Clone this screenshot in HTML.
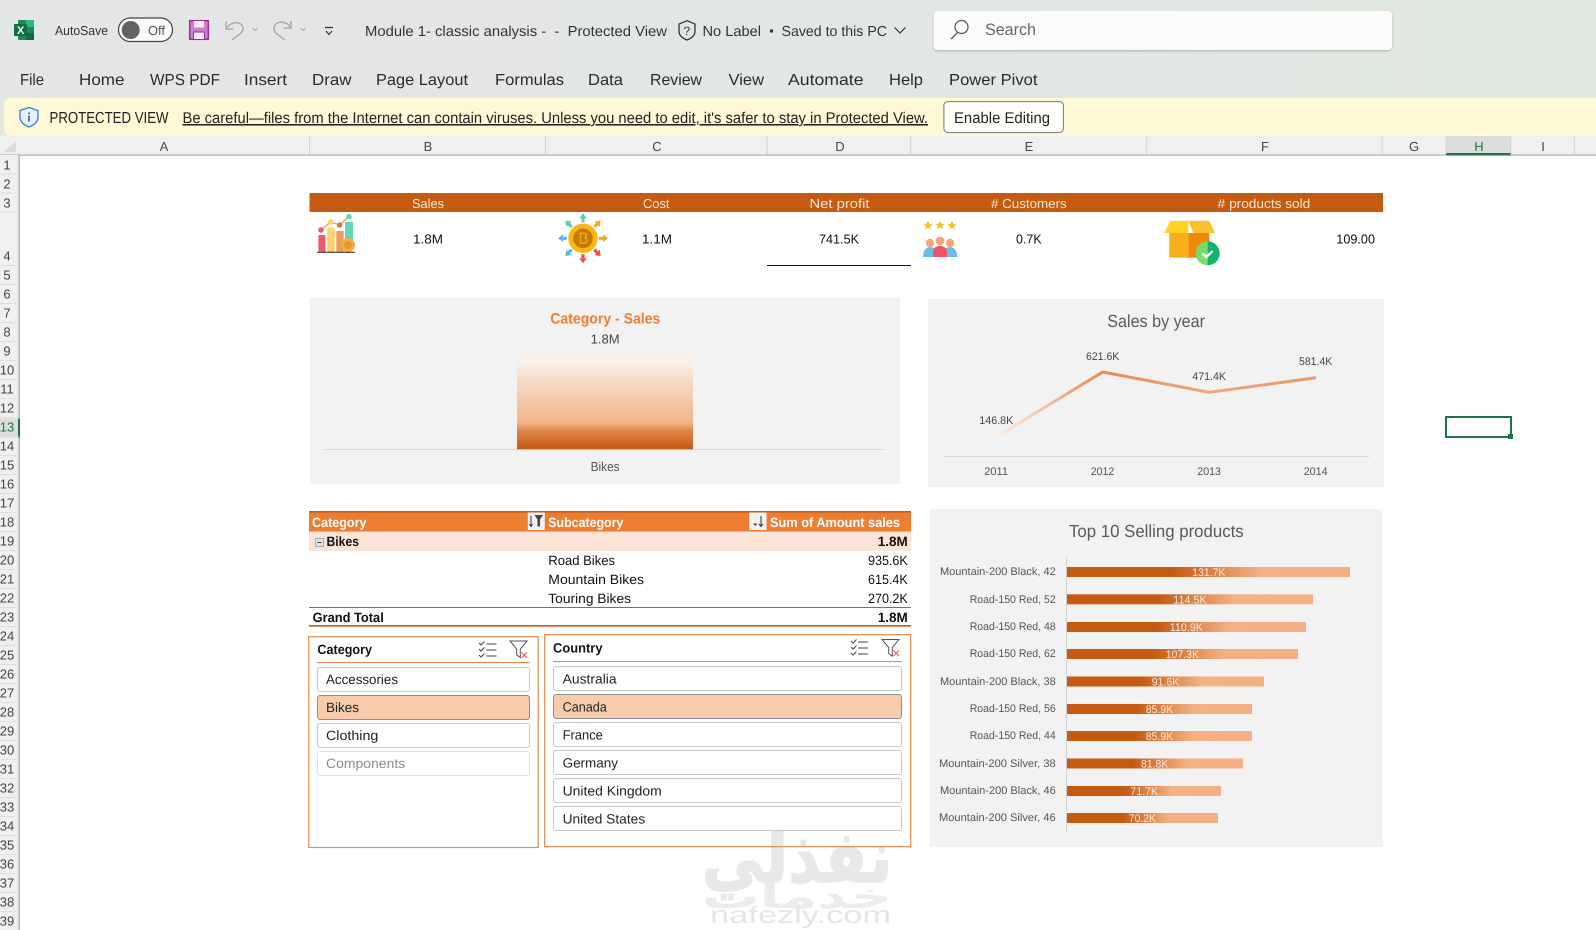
<!DOCTYPE html>
<html lang="en"><head><meta charset="utf-8"><title>Module 1- classic analysis</title>
<style>
html,body{margin:0;padding:0;background:#fff;width:1596px;height:930px;overflow:hidden}
svg{display:block}
text{font-family:"Liberation Sans",sans-serif;text-rendering:geometricPrecision}
.m{font-size:16px;fill:#2b2b2b}
.t{font-size:14.5px;fill:#333}
.c{font-size:13px;fill:#454545;text-anchor:middle}
.r{font-size:13px;fill:#454545;text-anchor:middle}
.h{font-size:13px;fill:#fbe9dc}
.v{font-size:13px;fill:#111}
.l{font-size:11px;fill:#444}
.pv{font-size:13.5px;fill:#111}
.pb{font-size:13.5px;fill:#111;font-weight:bold}
.ph{font-size:13.5px;fill:#fff;font-weight:bold}
.s{font-size:13.5px;fill:#222}
.d{font-size:11px;fill:#fbeadf}
.a{font-size:11px;fill:#555}
</style></head><body>
<svg width="1596" height="930" viewBox="0 0 1596 930" xmlns="http://www.w3.org/2000/svg">
<defs>
<linearGradient id="rib" x1="0" x2="1" y1="0" y2="0"><stop offset="0" stop-color="#e5e6e6"/><stop offset="1" stop-color="#e0e8e2"/></linearGradient>
<linearGradient id="bar" x1="0" x2="0" y1="0" y2="1"><stop offset="0" stop-color="#f5f0ec"/><stop offset=".1" stop-color="#f8efe8"/><stop offset=".3" stop-color="#f6d9c4"/><stop offset=".55" stop-color="#f4c39f"/><stop offset=".72" stop-color="#f2b388"/><stop offset=".82" stop-color="#db8143"/><stop offset="1" stop-color="#c55a11"/></linearGradient>
<linearGradient id="hb" x1="0" x2="1" y1="0" y2="0"><stop offset=".37" stop-color="#c55a11"/><stop offset=".68" stop-color="#f4b183"/><stop offset="1" stop-color="#f4b084"/></linearGradient>
<linearGradient id="ln" gradientUnits="userSpaceOnUse" x1="996" x2="1316" y1="0" y2="0"><stop offset="0" stop-color="#fdf0e6"/><stop offset=".33" stop-color="#e68a50"/><stop offset=".66" stop-color="#efa87c"/><stop offset="1" stop-color="#ea9764"/></linearGradient>
<path id="ar" d="M0 -25 L-3.8 -20 H-1.6 V-16 H1.6 V-20 H3.8 Z"/>
<filter id="sh" x="-5%" y="-20%" width="110%" height="150%"><feDropShadow dx="0" dy="1" stdDeviation="1" flood-color="#000" flood-opacity=".25"/></filter>
</defs>

<!-- ribbon -->
<rect width="1596" height="136" fill="url(#rib)"/>
<!-- excel icon -->
<rect x="18" y="20" width="16" height="20" rx="1" fill="#1d8a55"/>
<rect x="26" y="20" width="8" height="7" fill="#37b778"/>
<rect x="26" y="33" width="8" height="7" fill="#0f6b3c"/>
<rect x="14" y="24" width="13" height="12" rx="1" fill="#0f7040"/>
<text x="17" y="34" font-size="11" font-weight="bold" fill="#fff">X</text>
<text class="t" x="55" y="35" style="font-size:13px" textLength="53" lengthAdjust="spacingAndGlyphs">AutoSave</text>
<rect x="118.5" y="18" width="54" height="23.5" rx="11.7" fill="#fafafa" stroke="#444" stroke-width="1.2"/>
<circle cx="130.7" cy="30" r="9" fill="#626262"/>
<text x="148" y="35" style="font-size:13px;fill:#555" textLength="17" lengthAdjust="spacingAndGlyphs">Off</text>
<!-- save -->
<rect x="189.7" y="20.7" width="18.6" height="18.6" fill="#cf7fcb" stroke="#9b2c9e" stroke-width="1.5"/>
<rect x="194" y="21" width="10" height="6.5" fill="#fbe8fa"/>
<rect x="193.5" y="32" width="11" height="7.5" fill="#fbe8fa" stroke="#9b2c9e"/>
<!-- undo redo -->
<g fill="none" stroke="#a9acab" stroke-width="1.5">
<path d="M226 21.5V29H233.5M226 29C230 21 243 20 243 29C243 33 238 35 232 40"/>
<path d="M291 21V28H283.5M291 28C287 20 274 20 274 29C274 33 280 36 285 40"/>
<path d="M252.5 28l2.5 2.5 2.5-2.5M300.5 28l2.5 2.5 2.5-2.5" stroke-width="1"/>
</g>
<path d="M325 27.5h8M326 31l3 3.5 3-3.5" fill="none" stroke="#333" stroke-width="1.2"/>
<text class="t" x="365" y="36" textLength="302" lengthAdjust="spacingAndGlyphs">Module 1- classic analysis -&#160; -&#160; Protected View</text>
<path d="M687 20.7L679 24V31C679 36 683 38.5 687 40C691 38.5 695 36 695 31V24Z" fill="none" stroke="#333" stroke-width="1.3"/>
<text x="683.5" y="35" style="font-size:12px;fill:#333">?</text>
<text class="t" x="702.5" y="36" textLength="58.5" lengthAdjust="spacingAndGlyphs">No Label</text>
<circle cx="771.5" cy="31" r="1.7" fill="#333"/>
<text class="t" x="781.5" y="36" textLength="105.5" lengthAdjust="spacingAndGlyphs">Saved to this PC</text>
<path d="M894.5 27.5l5.5 5.5 5.5-5.5" fill="none" stroke="#333" stroke-width="1.2"/>
<rect x="933.5" y="11" width="458.5" height="39" rx="4" fill="#fafbfa" filter="url(#sh)"/>
<circle cx="961.5" cy="27" r="6.5" fill="none" stroke="#555" stroke-width="1.2"/>
<path d="M957.5 32.5L951 39" stroke="#555" stroke-width="1.3"/>
<text x="985" y="35" style="font-size:16.5px;fill:#666" textLength="51" lengthAdjust="spacingAndGlyphs">Search</text>
<!-- menu -->
<g class="menu">
<text class="m" x="20" y="85" textLength="24" lengthAdjust="spacingAndGlyphs">File</text>
<text class="m" x="79" y="85" textLength="45.5" lengthAdjust="spacingAndGlyphs">Home</text>
<text class="m" x="150" y="85" textLength="70" lengthAdjust="spacingAndGlyphs">WPS PDF</text>
<text class="m" x="244" y="85" textLength="43" lengthAdjust="spacingAndGlyphs">Insert</text>
<text class="m" x="312" y="85" textLength="39.5" lengthAdjust="spacingAndGlyphs">Draw</text>
<text class="m" x="376" y="85" textLength="92" lengthAdjust="spacingAndGlyphs">Page Layout</text>
<text class="m" x="495" y="85" textLength="69" lengthAdjust="spacingAndGlyphs">Formulas</text>
<text class="m" x="588" y="85" textLength="35" lengthAdjust="spacingAndGlyphs">Data</text>
<text class="m" x="650" y="85" textLength="52" lengthAdjust="spacingAndGlyphs">Review</text>
<text class="m" x="728.5" y="85" textLength="35.5" lengthAdjust="spacingAndGlyphs">View</text>
<text class="m" x="788" y="85" textLength="75.5" lengthAdjust="spacingAndGlyphs">Automate</text>
<text class="m" x="889" y="85" textLength="34" lengthAdjust="spacingAndGlyphs">Help</text>
<text class="m" x="949" y="85" textLength="88.5" lengthAdjust="spacingAndGlyphs">Power Pivot</text>
</g>
<!-- protected bar -->
<rect x="4" y="98" width="1600" height="38" rx="7" fill="#fff8d6"/>
<path d="M29 107.5L20 110.5V117C20 122 24 125 29 127C34 125 38 122 38 117V110.5Z" fill="#e8f1fb" stroke="#3a86cc" stroke-width="1.4"/>
<path d="M29 112.5v1.6M29 115.5v6" stroke="#2a6fb0" stroke-width="1.8"/>
<text x="49.5" y="123" style="font-size:16px;fill:#222" textLength="119" lengthAdjust="spacingAndGlyphs">PROTECTED VIEW</text>
<text x="182.5" y="123" style="font-size:15.5px;fill:#222;text-decoration:underline" textLength="745.5" lengthAdjust="spacingAndGlyphs">Be careful—files from the Internet can contain viruses. Unless you need to edit, it's safer to stay in Protected View.</text>
<rect x="943.9" y="101.6" width="119.5" height="31" rx="4" fill="#fffefa" stroke="#777" stroke-width="1"/>
<text x="954" y="123" style="font-size:15.5px;fill:#222" textLength="96" lengthAdjust="spacingAndGlyphs">Enable Editing</text>

<!-- column headers -->
<rect x="0" y="136" width="1596" height="19" fill="#f0f0f0"/>
<rect x="1446.3" y="136" width="64.4" height="19" fill="#dbdedc"/>
<path d="M309.5 137V154M545.5 137V154M767 137V154M910.7 137V154M1146.7 137V154M1382 137V154M1446.3 137V154M1510.7 137V154M1574.3 137V154" stroke="#d2d2d2"/>
<rect x="0" y="154.5" width="1596" height="1.2" fill="#aaa"/>
<rect x="1446.3" y="153" width="64.4" height="2.3" fill="#217346"/>
<polygon points="4,152 16,141 16,152" fill="#dadada"/>
<g>
<text class="c" x="164" y="151">A</text><text class="c" x="428" y="151">B</text><text class="c" x="657" y="151">C</text><text class="c" x="840" y="151">D</text><text class="c" x="1029" y="151">E</text><text class="c" x="1265" y="151">F</text><text class="c" x="1414" y="151">G</text><text class="c" x="1479" y="151" style="fill:#217346">H</text><text class="c" x="1543" y="151">I</text>
</g>
<!-- row header -->
<rect x="0" y="155" width="19.5" height="775" fill="#f0f0f0"/>
<rect x="0" y="418.6" width="19.5" height="19" fill="#dbdedc"/>
<rect x="18.5" y="155" width="1.3" height="775" fill="#aaa"/>
<rect x="18" y="418.6" width="2" height="19" fill="#217346"/>
<path d="M0 174H19M0 193H19M0 212H19M0 265.6H19M0 284.6H19M0 303.6H19M0 322.6H19M0 341.6H19M0 360.6H19M0 379.6H19M0 398.6H19M0 417.6H19M0 436.6H19M0 455.6H19M0 474.6H19M0 493.6H19M0 512.6H19M0 531.6H19M0 550.6H19M0 569.6H19M0 588.6H19M0 607.6H19M0 626.6H19M0 645.6H19M0 664.6H19M0 683.6H19M0 702.6H19M0 721.6H19M0 740.6H19M0 759.6H19M0 778.6H19M0 797.6H19M0 816.6H19M0 835.6H19M0 854.6H19M0 873.6H19M0 892.6H19M0 911.6H19" stroke="#dcdcdc"/>
<g>
<text class="r" x="7" y="169.5">1</text><text class="r" x="7" y="188.5">2</text><text class="r" x="7" y="207.5">3</text><text class="r" x="7" y="260.7">4</text><text class="r" x="7" y="279.7">5</text><text class="r" x="7" y="298.7">6</text><text class="r" x="7" y="317.7">7</text><text class="r" x="7" y="336.7">8</text><text class="r" x="7" y="355.7">9</text><text class="r" x="7" y="374.7">10</text><text class="r" x="7" y="393.7">11</text><text class="r" x="7" y="412.7">12</text><text class="r" x="7" y="431.7" style="fill:#217346">13</text><text class="r" x="7" y="450.7">14</text><text class="r" x="7" y="469.7">15</text><text class="r" x="7" y="488.7">16</text><text class="r" x="7" y="507.7">17</text><text class="r" x="7" y="526.7">18</text><text class="r" x="7" y="545.7">19</text><text class="r" x="7" y="564.7">20</text><text class="r" x="7" y="583.7">21</text><text class="r" x="7" y="602.7">22</text><text class="r" x="7" y="621.7">23</text><text class="r" x="7" y="640.7">24</text><text class="r" x="7" y="659.7">25</text><text class="r" x="7" y="678.7">26</text><text class="r" x="7" y="697.7">27</text><text class="r" x="7" y="716.7">28</text><text class="r" x="7" y="735.7">29</text><text class="r" x="7" y="754.7">30</text><text class="r" x="7" y="773.7">31</text><text class="r" x="7" y="792.7">32</text><text class="r" x="7" y="811.7">33</text><text class="r" x="7" y="830.7">34</text><text class="r" x="7" y="849.7">35</text><text class="r" x="7" y="868.7">36</text><text class="r" x="7" y="887.7">37</text><text class="r" x="7" y="906.7">38</text><text class="r" x="7" y="925.7">39</text>
</g>

<!-- selected cell -->
<rect x="1446" y="417" width="65" height="20" fill="none" stroke="#217346" stroke-width="2"/>
<rect x="1508" y="434" width="5" height="5" fill="#217346"/>

<!-- KPI band -->
<rect x="309.5" y="193" width="1073.5" height="19" fill="#c55a11"/>
<text class="h" x="412" y="208" textLength="32" lengthAdjust="spacingAndGlyphs">Sales</text>
<text class="h" x="643" y="208" textLength="26.5" lengthAdjust="spacingAndGlyphs">Cost</text>
<text class="h" x="809.5" y="208" textLength="60" lengthAdjust="spacingAndGlyphs">Net profit</text>
<text class="h" x="991" y="208" textLength="75.7" lengthAdjust="spacingAndGlyphs"># Customers</text>
<text class="h" x="1217.7" y="208" textLength="92.6" lengthAdjust="spacingAndGlyphs"># products sold</text>
<text class="v" x="413" y="243.6" textLength="30" lengthAdjust="spacingAndGlyphs">1.8M</text>
<text class="v" x="642" y="243.6" textLength="30" lengthAdjust="spacingAndGlyphs">1.1M</text>
<text class="v" x="819" y="243.6" textLength="40" lengthAdjust="spacingAndGlyphs">741.5K</text>
<text class="v" x="1016" y="243.6" textLength="25.7" lengthAdjust="spacingAndGlyphs">0.7K</text>
<text class="v" x="1336.3" y="243.6" textLength="38.7" lengthAdjust="spacingAndGlyphs">109.00</text>
<rect x="767" y="265" width="144" height="1" fill="#111"/>

<!-- chart icon -->
<rect x="318.4" y="235" width="7" height="17" fill="#ee5a66"/>
<rect x="327.3" y="227.7" width="7.4" height="24.3" fill="#ffd167"/>
<rect x="336.3" y="231" width="7.4" height="21" fill="#ed9b5f"/>
<rect x="345" y="222" width="8" height="18" fill="#62d6b9"/>
<circle cx="348" cy="245" r="7" fill="#f3ab3e"/>
<circle cx="348" cy="245" r="4" fill="#e09a30"/>
<path d="M321 230L330.6 222L339.6 225L349 216.7" fill="none" stroke="#ed9b5f" stroke-width="1.4"/>
<circle cx="321" cy="230" r="2.8" fill="#ee5a66"/><circle cx="330.6" cy="222" r="2.8" fill="#ffd167"/><circle cx="339.6" cy="225" r="2.8" fill="#d97a3a"/><circle cx="349" cy="216.7" r="2.8" fill="#62d6b9"/>
<rect x="317" y="251.7" width="38" height="1.2" fill="#444"/>

<!-- coin icon -->
<g transform="translate(583 238.3)">
<use href="#ar" fill="#5ccdb4"/>
<use href="#ar" fill="#5ccdb4" transform="rotate(-45)"/>
<use href="#ar" fill="#f5a623" transform="rotate(45)"/>
<use href="#ar" fill="#f5a623" transform="rotate(90)"/>
<use href="#ar" fill="#e8505b" transform="rotate(135)"/>
<use href="#ar" fill="#e8505b" transform="rotate(180)"/>
<use href="#ar" fill="#5cb8f0" transform="rotate(225)"/>
<use href="#ar" fill="#5cb8f0" transform="rotate(270)"/>
<circle r="14.7" fill="#fbb614"/>
<circle r="9.8" fill="#c57a08"/>
<path d="M-2.5 -5H1.5C4 -5 4 -1 1.5 -.5C4.5 0 4.5 5 1.5 5H-2.5Z" fill="none" stroke="#f2a70e" stroke-width="1.5"/>
</g>

<!-- customers icon -->
<g fill="#fbbf1f">
<polygon points="928,220.5 929.3,223.6 932.6,223.9 930.1,226 930.9,229.3 928,227.5 925.1,229.3 925.9,226 923.4,223.9 926.7,223.6"/>
<polygon points="940,220.5 941.3,223.6 944.6,223.9 942.1,226 942.9,229.3 940,227.5 937.1,229.3 937.9,226 935.4,223.9 938.7,223.6"/>
<polygon points="952,220.5 953.3,223.6 956.6,223.9 954.1,226 954.9,229.3 952,227.5 949.1,229.3 949.9,226 947.4,223.9 950.7,223.6"/>
</g>
<path d="M923 257C923 251 926 247 930 247C933 247 936 249 937 252V257Z" fill="#6dbdea"/>
<path d="M957.3 257C957.3 251 954 247 950 247C947 247 944 249 943 252V257Z" fill="#6dbdea"/>
<circle cx="930" cy="243" r="4.2" fill="#f4a77a"/><circle cx="950" cy="243" r="4.2" fill="#f4a77a"/>
<path d="M933 257V252C933 248 936 246 940 246C944 246 947 248 947 252V257Z" fill="#ef5365"/>
<circle cx="940" cy="241" r="4.4" fill="#f4a77a"/>

<!-- box icon -->
<rect x="1169.3" y="233" width="19" height="24.7" fill="#f8b01a"/>
<rect x="1188.3" y="233" width="21" height="24.7" fill="#f0880a"/>
<polygon points="1170.5,220.7 1188.3,220.7 1188.3,233 1164.3,233" fill="#ffd326"/>
<polygon points="1188.3,220.7 1209.3,220.7 1215,233 1193.3,233" fill="#fdc030"/>
<circle cx="1207.7" cy="253.3" r="12" fill="#15b26b"/>
<path d="M1207.7 241.3A12 12 0 0 0 1207.7 265.3Z" fill="#7cdc6a"/>
<path d="M1202.5 253.5l3.7 3.5 6.5-6" fill="none" stroke="#fff" stroke-width="2.4"/>

<!-- category chart -->
<rect x="310" y="298" width="590" height="186" fill="#f2f2f2"/>
<text x="550.3" y="323.3" style="font-size:15px;font-weight:bold;fill:#ed7d31" textLength="110" lengthAdjust="spacingAndGlyphs">Category - Sales</text>
<text x="590.6" y="343.6" style="font-size:13px;fill:#444" textLength="29" lengthAdjust="spacingAndGlyphs">1.8M</text>
<rect x="324" y="449" width="561.6" height="1" fill="#d9d9d9"/>
<rect x="517" y="354" width="176" height="95.3" fill="url(#bar)"/>
<text x="590.6" y="471" style="font-size:13px;fill:#555" textLength="29" lengthAdjust="spacingAndGlyphs">Bikes</text>

<!-- sales by year -->
<rect x="928" y="299" width="456" height="188" fill="#f2f2f2"/>
<text x="1107.3" y="327" style="font-size:17.5px;fill:#595959" textLength="97.7" lengthAdjust="spacingAndGlyphs">Sales by year</text>
<polyline points="996.7,436.7 1102.7,372 1209.3,392.3 1316,377.7" fill="none" stroke="url(#ln)" stroke-width="3" stroke-linejoin="round"/>
<text class="l" x="979.3" y="424" textLength="34" lengthAdjust="spacingAndGlyphs">146.8K</text>
<text class="l" x="1086" y="360" textLength="33.3" lengthAdjust="spacingAndGlyphs">621.6K</text>
<text class="l" x="1192.3" y="380" textLength="33.7" lengthAdjust="spacingAndGlyphs">471.4K</text>
<text class="l" x="1299" y="365" textLength="33.3" lengthAdjust="spacingAndGlyphs">581.4K</text>
<rect x="944" y="456" width="425.3" height="1" fill="#d9d9d9"/>
<text class="a" x="984.3" y="475" textLength="23.7" lengthAdjust="spacingAndGlyphs">2011</text>
<text class="a" x="1090.7" y="475" textLength="23.6" lengthAdjust="spacingAndGlyphs">2012</text>
<text class="a" x="1197.3" y="475" textLength="23.7" lengthAdjust="spacingAndGlyphs">2013</text>
<text class="a" x="1303.7" y="475" textLength="24" lengthAdjust="spacingAndGlyphs">2014</text>

<!-- pivot -->
<rect x="309" y="512" width="602" height="19.5" fill="#ed7d31"/>
<rect x="309" y="511" width="602" height="1.6" fill="#c55a11"/>
<text class="ph" x="312" y="527" textLength="54.5" lengthAdjust="spacingAndGlyphs">Category</text>
<rect x="527.8" y="512.5" width="17" height="17.5" fill="#f2f2f2"/>
<path d="M531 516v10M529.3 524l1.7 2.5 1.7-2.5" fill="none" stroke="#444" stroke-width="1.1"/>
<path d="M534.5 515h8.5l-3 4.5v7h-2.5v-7Z" fill="#444"/>
<text class="ph" x="548.3" y="527" textLength="75" lengthAdjust="spacingAndGlyphs">Subcategory</text>
<rect x="749.2" y="512.5" width="17.4" height="17.5" fill="#f2f2f2"/>
<path d="M761 516v10M759 524l2 2.5 2-2.5" fill="none" stroke="#444" stroke-width="1.1"/>
<path d="M753 523.5h4.5l-2.2 2.5Z" fill="#444"/>
<text class="ph" x="770" y="527" textLength="130" lengthAdjust="spacingAndGlyphs">Sum of Amount sales</text>
<rect x="309" y="531.5" width="602" height="19.5" fill="#fbe4d5"/>
<rect x="315.5" y="538.5" width="8" height="8" fill="#dfe3e8" stroke="#9aa3ad" stroke-width=".8"/>
<path d="M317.5 542.5h4" stroke="#333" stroke-width="1"/>
<text class="pb" x="326.5" y="546" textLength="32.5" lengthAdjust="spacingAndGlyphs">Bikes</text>
<text class="pb" x="877.7" y="546" textLength="30" lengthAdjust="spacingAndGlyphs">1.8M</text>
<text class="pv" x="548.3" y="565" textLength="66.7" lengthAdjust="spacingAndGlyphs">Road Bikes</text>
<text class="pv" x="868" y="565" textLength="39.8" lengthAdjust="spacingAndGlyphs">935.6K</text>
<text class="pv" x="548.3" y="584" textLength="95.7" lengthAdjust="spacingAndGlyphs">Mountain Bikes</text>
<text class="pv" x="868" y="584" textLength="39.8" lengthAdjust="spacingAndGlyphs">615.4K</text>
<text class="pv" x="548.3" y="603" textLength="82.7" lengthAdjust="spacingAndGlyphs">Touring Bikes</text>
<text class="pv" x="868" y="603" textLength="39.8" lengthAdjust="spacingAndGlyphs">270.2K</text>
<rect x="309" y="607" width="602" height="1" fill="#c55a11"/>
<text class="pb" x="312.6" y="622" textLength="71.2" lengthAdjust="spacingAndGlyphs">Grand Total</text>
<text class="pb" x="877.7" y="622" textLength="30" lengthAdjust="spacingAndGlyphs">1.8M</text>
<rect x="309" y="625" width="602" height="1.6" fill="#c55a11"/>

<!-- category slicer -->
<rect x="308.7" y="636.7" width="229.5" height="210.8" fill="#fff" stroke="#e08a4e" stroke-width="1.2"/>
<text class="pb" x="317.4" y="654" textLength="54.6" lengthAdjust="spacingAndGlyphs">Category</text>
<rect x="317" y="662" width="212.7" height="1.1" fill="#e08a50"/>
<path d="M479 643l2 2 3.5-3.5M479 649l2 2 3.5-3.5M479 655l2 2 3.5-3.5" fill="none" stroke="#444" stroke-width="1"/>
<path d="M486.5 644h10M486.5 650h10M486.5 656h10" stroke="#444" stroke-width="1.1"/>
<path d="M510 641h17l-6.7 8v8.5l-3.6-2.5v-6Z" fill="none" stroke="#555" stroke-width="1"/>
<path d="M521.5 652.5l5.5 5.5M527 652.5l-5.5 5.5" stroke="#e5604f" stroke-width="1.2"/>
<g stroke-width="1">
<rect x="317.5" y="667.5" width="212" height="24" rx="2.5" fill="#fff" stroke="#c8c8c8"/>
<rect x="317.5" y="695.5" width="212" height="24" rx="2.5" fill="#f8cbad" stroke="#8f8f8f"/>
<rect x="317.5" y="723.5" width="212" height="24" rx="2.5" fill="#fff" stroke="#c8c8c8"/>
<rect x="317.5" y="751.5" width="212" height="24" rx="2.5" fill="#fff" stroke="#e0e0e0"/>
</g>
<text class="s" x="326" y="684" textLength="72" lengthAdjust="spacingAndGlyphs">Accessories</text>
<text class="s" x="326" y="712" textLength="33" lengthAdjust="spacingAndGlyphs">Bikes</text>
<text class="s" x="326" y="740" textLength="52.3" lengthAdjust="spacingAndGlyphs">Clothing</text>
<text class="s" x="326" y="768" style="fill:#8a8a8a" textLength="79.2" lengthAdjust="spacingAndGlyphs">Components</text>

<!-- country slicer -->
<rect x="544.7" y="634.7" width="366" height="212" fill="#fff"/>
<!-- watermark -->
<text x="797" y="882" text-anchor="middle" textLength="191" lengthAdjust="spacingAndGlyphs" style="font-family:'DejaVu Sans',sans-serif;font-size:72px;font-weight:bold;fill:#e8e8e8;stroke:#e8e8e8;stroke-width:1.5">نفذلي</text>
<text x="797" y="908" text-anchor="middle" textLength="191" lengthAdjust="spacingAndGlyphs" style="font-family:'DejaVu Sans',sans-serif;font-size:34px;font-weight:bold;fill:#ececec">خدمات</text>
<text x="710" y="923" style="font-size:24px;fill:#e5e5e5" textLength="181" lengthAdjust="spacingAndGlyphs">nafezly.com</text>

<rect x="544.7" y="634.7" width="366" height="212" fill="none" stroke="#e08a4e" stroke-width="1.2"/>
<text class="pb" x="553" y="652.7" textLength="49.5" lengthAdjust="spacingAndGlyphs">Country</text>
<rect x="553" y="661" width="348.8" height="1.1" fill="#e08a50"/>
<path d="M851 641l2 2 3.5-3.5M851 647l2 2 3.5-3.5M851 653l2 2 3.5-3.5" fill="none" stroke="#444" stroke-width="1"/>
<path d="M858 642h10M858 648h10M858 654h10" stroke="#444" stroke-width="1.1"/>
<path d="M882 639.5h17l-6.7 8v8.5l-3.6-2.5v-6Z" fill="none" stroke="#555" stroke-width="1"/>
<path d="M893.5 650.5l5.5 5.5M899 650.5l-5.5 5.5" stroke="#e5604f" stroke-width="1.2"/>
<g stroke-width="1">
<rect x="553.5" y="666.5" width="348" height="24" rx="2.5" fill="#fff" stroke="#c8c8c8"/>
<rect x="553.5" y="694.5" width="348" height="24" rx="2.5" fill="#f8cbad" stroke="#8f8f8f"/>
<rect x="553.5" y="722.5" width="348" height="24" rx="2.5" fill="#fff" stroke="#c8c8c8"/>
<rect x="553.5" y="750.5" width="348" height="24" rx="2.5" fill="#fff" stroke="#c8c8c8"/>
<rect x="553.5" y="778.5" width="348" height="24" rx="2.5" fill="#fff" stroke="#c8c8c8"/>
<rect x="553.5" y="806.5" width="348" height="24" rx="2.5" fill="#fff" stroke="#c8c8c8"/>
</g>
<text class="s" x="562.6" y="683.3" textLength="54" lengthAdjust="spacingAndGlyphs">Australia</text>
<text class="s" x="562.6" y="711.3" textLength="44.2" lengthAdjust="spacingAndGlyphs">Canada</text>
<text class="s" x="562.6" y="739.3" textLength="40.3" lengthAdjust="spacingAndGlyphs">France</text>
<text class="s" x="562.6" y="767.3" textLength="55.4" lengthAdjust="spacingAndGlyphs">Germany</text>
<text class="s" x="562.6" y="795.3" textLength="99.2" lengthAdjust="spacingAndGlyphs">United Kingdom</text>
<text class="s" x="562.6" y="823.3" textLength="82.6" lengthAdjust="spacingAndGlyphs">United States</text>

<!-- top 10 -->
<rect x="930" y="509" width="453" height="338" fill="#f2f2f2"/>
<text x="1069" y="537" style="font-size:17.5px;fill:#595959" textLength="174.7" lengthAdjust="spacingAndGlyphs">Top 10 Selling products</text>
<rect x="1066" y="557.3" width="1" height="274.4" fill="#d0d0d0"/>
<rect x="1067" y="567" width="283" height="10" fill="url(#hb)"/>
<rect x="1067" y="594.3" width="246" height="10" fill="url(#hb)"/>
<rect x="1067" y="622" width="239" height="10" fill="url(#hb)"/>
<rect x="1067" y="649" width="231" height="10" fill="url(#hb)"/>
<rect x="1067" y="676.5" width="197" height="10" fill="url(#hb)"/>
<rect x="1067" y="704" width="185" height="10" fill="url(#hb)"/>
<rect x="1067" y="731" width="185" height="10" fill="url(#hb)"/>
<rect x="1067" y="758.5" width="176" height="10" fill="url(#hb)"/>
<rect x="1067" y="786" width="154" height="10" fill="url(#hb)"/>
<rect x="1067" y="813" width="151" height="10" fill="url(#hb)"/>
<text class="d" x="1192.3" y="576" textLength="33" lengthAdjust="spacingAndGlyphs">131.7K</text>
<text class="d" x="1173.3" y="603.5" textLength="33.4" lengthAdjust="spacingAndGlyphs">114.5K</text>
<text class="d" x="1169.7" y="631" textLength="33.3" lengthAdjust="spacingAndGlyphs">110.9K</text>
<text class="d" x="1165.7" y="658" textLength="33.3" lengthAdjust="spacingAndGlyphs">107.3K</text>
<text class="d" x="1151.7" y="685.5" textLength="27.6" lengthAdjust="spacingAndGlyphs">91.6K</text>
<text class="d" x="1145.7" y="713" textLength="27.6" lengthAdjust="spacingAndGlyphs">85.9K</text>
<text class="d" x="1145.7" y="740" textLength="27.6" lengthAdjust="spacingAndGlyphs">85.9K</text>
<text class="d" x="1141" y="767.5" textLength="27.3" lengthAdjust="spacingAndGlyphs">81.8K</text>
<text class="d" x="1130.3" y="795" textLength="27.7" lengthAdjust="spacingAndGlyphs">71.7K</text>
<text class="d" x="1128.7" y="822" textLength="27.3" lengthAdjust="spacingAndGlyphs">70.2K</text>
<text class="a" x="940" y="575" textLength="115.7" lengthAdjust="spacingAndGlyphs">Mountain-200 Black, 42</text>
<text class="a" x="969.7" y="603" textLength="86" lengthAdjust="spacingAndGlyphs">Road-150 Red, 52</text>
<text class="a" x="969.7" y="630" textLength="86" lengthAdjust="spacingAndGlyphs">Road-150 Red, 48</text>
<text class="a" x="969.7" y="657" textLength="86" lengthAdjust="spacingAndGlyphs">Road-150 Red, 62</text>
<text class="a" x="940" y="685" textLength="115.7" lengthAdjust="spacingAndGlyphs">Mountain-200 Black, 38</text>
<text class="a" x="969.7" y="712" textLength="86" lengthAdjust="spacingAndGlyphs">Road-150 Red, 56</text>
<text class="a" x="969.7" y="739" textLength="86" lengthAdjust="spacingAndGlyphs">Road-150 Red, 44</text>
<text class="a" x="939" y="767" textLength="116.7" lengthAdjust="spacingAndGlyphs">Mountain-200 Silver, 38</text>
<text class="a" x="940" y="794" textLength="115.7" lengthAdjust="spacingAndGlyphs">Mountain-200 Black, 46</text>
<text class="a" x="939" y="821" textLength="116.7" lengthAdjust="spacingAndGlyphs">Mountain-200 Silver, 46</text>
</svg>
</body></html>
